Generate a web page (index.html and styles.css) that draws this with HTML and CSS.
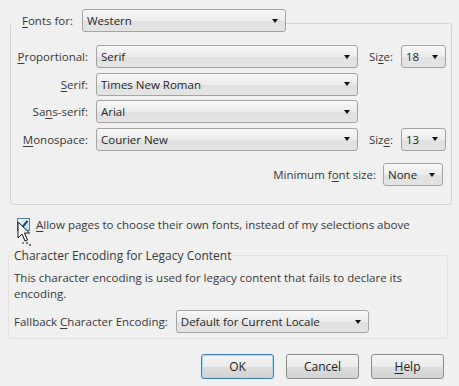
FILE: index.html
```html
<!DOCTYPE html>
<html lang="en">
<head>
    <meta charset="UTF-8">
    <meta name="viewport" content="width=device-width, initial-scale=1.0">
    <title>Fonts</title>
    <link rel="stylesheet" href="styles.css">
</head>
<body>
  <div class="dialog">
    <fieldset class="group fonts">
      <legend class="fonts-for">
        <label><u>F</u>onts for:</label>
        <div class="combo western">Western</div>
      </legend>

      <div class="font-grid">
        <label><u>P</u>roportional:</label>
        <div class="combo">Serif</div>
        <label>Si<u>z</u>e:</label>
        <div class="combo">18</div>

        <label><u>S</u>erif:</label>
        <div class="combo">Times New Roman</div>
        <span></span><span></span>

        <label>Sa<u>n</u>s-serif:</label>
        <div class="combo">Arial</div>
        <span></span><span></span>

        <label><u>M</u>onospace:</label>
        <div class="combo">Courier New</div>
        <label>Siz<u>e</u>:</label>
        <div class="combo">13</div>
      </div>

      <div class="min-row">
        <label>Minimum f<u>o</u>nt size:</label>
        <div class="combo min">None</div>
      </div>
    </fieldset>

    <div class="check-row">
      <span class="checkbox">
        <svg width="11" height="11" viewBox="0 0 11 11"><path d="M1.5 5.5 L4.2 8.5 L9.5 1.8" fill="none" stroke="#1d3f6e" stroke-width="2"/></svg>
      </span>
      <span><u>A</u>llow pages to choose their own fonts, instead of my selections above</span>
      <!-- mouse pointer over the checkbox -->
      <svg class="cursor" width="16" height="26" viewBox="0 0 16 26">
        <path d="M1 1 L1 17 L5 13 L8 20 L10.5 19 L7.5 12 L12.5 12 Z" fill="#fff" stroke="#111" stroke-width="1"/>
        <circle cx="10" cy="22" r="0.9" fill="#333"/>
        <circle cx="13" cy="24" r="0.9" fill="#333"/>
        <circle cx="6" cy="22" r="0.9" fill="#555"/>
      </svg>
    </div>

    <fieldset class="group encoding">
      <legend>Character Encoding for Legacy Content</legend>
      <p>This character encoding is used for legacy content that fails to declare its encoding.</p>
      <div class="fallback-row">
        <label>Fallback <u>C</u>haracter Encoding:</label>
        <div class="combo fallback">Default for Current Locale</div>
      </div>
    </fieldset>

    <div class="buttons">
      <button class="btn default">OK</button>
      <button class="btn">Cancel</button>
      <button class="btn"><u>H</u>elp</button>
    </div>
  </div>
</body>
</html>
```

FILE: styles.css
```css
/* dialog background */
html, body {
  margin: 0;
  padding: 0;
  background: #f0f0f0;
  font-family: "Open Sans", "Noto Sans", sans-serif;
  font-size: 11.5px;
  color: #383838;
}

.dialog {
  width: 459px;
  height: 386px;
  padding-top: 9px;
  box-sizing: border-box;
}

u {
  text-decoration-thickness: 1px;
  text-underline-offset: 2px;
}

/* group boxes */
.group {
  margin: 0 7px 0 10px;
  padding: 0;
  min-width: 0;
  border: 1px solid #d4d4d4;
  border-radius: 3px;
}

.fonts-for {
  display: flex;
  align-items: center;
  gap: 9px;
  padding: 0 0 6px 11px;
}

.font-grid {
  display: grid;
  grid-template-columns: 77px 262px 27px 45px;
  grid-auto-rows: 23px;
  column-gap: 8px;
  row-gap: 4.5px;
  align-items: center;
  padding-top: 7px;
}

.font-grid label {
  justify-self: end;
}

.min-row {
  display: flex;
  justify-content: flex-end;
  align-items: center;
  gap: 7px;
  margin-top: 12.5px;
  padding: 0 8px 18px 0;
}

/* combobox */
.combo {
  position: relative;
  height: 23px;
  box-sizing: border-box;
  display: flex;
  align-items: center;
  padding: 0 20px 0 4px;
  border: 1px solid #a3a3a3;
  border-radius: 3px;
  background: linear-gradient(#f7f7f7, #ececec 50%, #e0e0e0 51%, #e4e4e4);
  color: #262626;
  white-space: nowrap;
  font-size: 11.5px;
}

.combo::after {
  content: "";
  position: absolute;
  right: 7px;
  top: 50%;
  margin-top: -2px;
  border-left: 3.5px solid transparent;
  border-right: 3.5px solid transparent;
  border-top: 4px solid #111111;
}

.western {
  width: 204px;
}

.min {
  width: 60px;
}

/* checkbox row */
.check-row {
  position: relative;
  display: flex;
  align-items: center;
  gap: 6px;
  height: 16px;
  margin: 11px 0 0 17px;
}

.checkbox {
  width: 13px;
  height: 13px;
  box-sizing: border-box;
  display: flex;
  align-items: center;
  justify-content: center;
  border: 1px solid #4f7fb0;
  background: linear-gradient(#e4f3fc, #b8dcf4);
}

.cursor {
  position: absolute;
  left: 0;
  top: 5px;
}

/* encoding box */
.encoding {
  margin: 15px 11px 0 8px;
  border-color: #e2e2e2;
  padding: 0 5px 5px 5px;
}

.encoding legend {
  padding: 0;
  font-size: 12px;
}

.encoding p {
  margin: 6px 0 0 0;
  line-height: 16px;
  width: 410px;
}

.fallback-row {
  display: flex;
  align-items: center;
  gap: 8px;
  margin-top: 8px;
}

.fallback {
  width: 193px;
}

/* dialog buttons */
.buttons {
  display: flex;
  justify-content: flex-end;
  gap: 12px;
  padding: 15px 15px 0 0;
}

.btn {
  width: 73px;
  height: 25px;
  padding: 0;
  border: 1px solid #8c8c8c;
  border-radius: 3px;
  background: linear-gradient(#f4f4f4, #ebebeb 50%, #dddddd 51%, #d2d2d2);
  font: inherit;
  font-size: 12px;
  color: #222222;
}

.btn.default {
  border-color: #3c7fb1;
  box-shadow: inset 0 0 0 1px #a9dbf6;
}
```
